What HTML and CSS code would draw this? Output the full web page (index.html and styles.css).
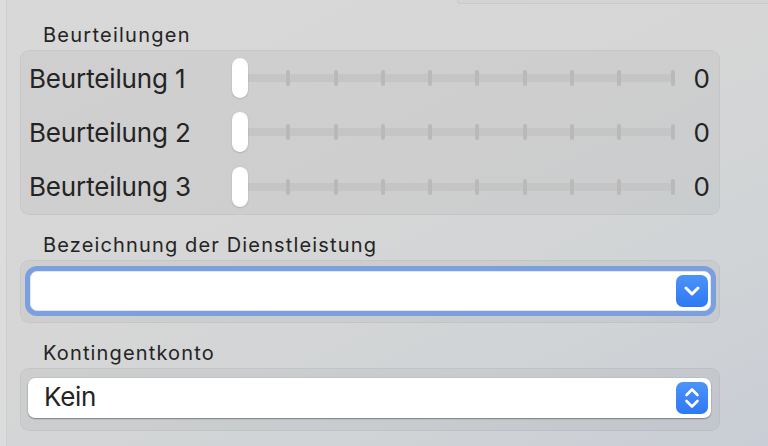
FILE: index.html
```html
<!DOCTYPE html>
<html lang="de">
<head>
<meta charset="utf-8">
<link rel="stylesheet" href="styles.css">
</head>
<body>
<div class="window">
  <div class="edge"></div>
  <div class="main">
    <div class="topbox"></div>

    <div class="label first">Beurteilungen</div>
    <div class="group ratings">
      <div class="row">
        <div class="rlabel">Beurteilung 1</div>
        <div class="slider">
          <div class="ticks"><i></i><i></i><i></i><i></i><i></i><i></i><i></i><i></i><i></i><i class="last"></i></div>
          <div class="thumb"></div>
        </div>
        <div class="value">0</div>
      </div>
      <div class="row">
        <div class="rlabel">Beurteilung 2</div>
        <div class="slider">
          <div class="ticks"><i></i><i></i><i></i><i></i><i></i><i></i><i></i><i></i><i></i><i class="last"></i></div>
          <div class="thumb"></div>
        </div>
        <div class="value">0</div>
      </div>
      <div class="row">
        <div class="rlabel">Beurteilung 3</div>
        <div class="slider">
          <div class="ticks"><i></i><i></i><i></i><i></i><i></i><i></i><i></i><i></i><i></i><i class="last"></i></div>
          <div class="thumb"></div>
        </div>
        <div class="value">0</div>
      </div>
    </div>

    <div class="label">Bezeichnung der Dienstleistung</div>
    <div class="group single">
      <div class="field">
        <div class="bluebtn">
          <svg width="32" height="32" viewBox="0 0 32 32"><path d="M10 13 L16 19 L22 13" fill="none" stroke="#fff" stroke-width="3" stroke-linecap="round" stroke-linejoin="round"/></svg>
        </div>
      </div>
    </div>

    <div class="label">Kontingentkonto</div>
    <div class="group single popup-group">
      <div class="popup">
        <span class="ptext">Kein</span>
        <div class="bluebtn">
          <svg width="32" height="32" viewBox="0 0 32 32"><path d="M10.5 13 L16 7.5 L21.5 13" fill="none" stroke="#fff" stroke-width="2.6" stroke-linecap="round" stroke-linejoin="round"/><path d="M10.5 19 L16 24.5 L21.5 19" fill="none" stroke="#fff" stroke-width="2.6" stroke-linecap="round" stroke-linejoin="round"/></svg>
        </div>
      </div>
    </div>
  </div>
</div>
</body>
</html>
```

FILE: styles.css
```css
html, body {
  margin: 0;
  padding: 0;
}
body {
  width: 768px;
  height: 446px;
  overflow: hidden;
  font-family: "Inter", "Liberation Sans", sans-serif;
  color: #242424;
  background: linear-gradient(155deg, #d8d8d8 0%, #d6d6d6 45%, #d0d4d6 75%, #c9cdd5 100%);
}
.window {
  display: flex;
  height: 446px;
}
.edge {
  width: 6px;
  flex: none;
  background: #dcdcdc;
  border-right: 1px solid #cfcfcf;
}
.main {
  flex: 1;
  display: flex;
  flex-direction: column;
  padding-left: 13px;
}
.topbox {
  align-self: flex-end;
  width: 310px;
  height: 3px;
  border-left: 1px solid #c9c9c9;
  border-bottom: 1px solid #c9c9c9;
  border-bottom-left-radius: 6px;
  background: #d4d4d4;
}
.label {
  font-size: 20px;
  line-height: 22px;
  letter-spacing: 1.15px;
  padding-left: 23px;
  margin-top: 19px;
  margin-bottom: 4px;
}
.label.first {
  margin-top: 20px;
  letter-spacing: 1.25px;
}
.group {
  width: 698px;
  border: 1px solid rgba(0, 0, 0, 0.045);
  background: rgba(0, 0, 0, 0.035);
  border-radius: 9px;
}
.ratings {
  height: 163px;
  display: grid;
  grid-template-rows: repeat(3, 54.33px);
}
.row {
  display: flex;
  align-items: center;
  padding-left: 8px;
}
.rlabel {
  width: 203px;
  font-size: 26px;
  letter-spacing: -0.15px;
}
.slider {
  position: relative;
  width: 444px;
  height: 40px;
  display: flex;
  align-items: center;
}
.ticks {
  margin-left: 7px;
  width: 436px;
  height: 16px;
  display: flex;
  gap: 43.3px;
  background: linear-gradient(#c5c5c5, #c5c5c5) center / 100% 8px no-repeat;
}
.ticks i {
  display: block;
  width: 4px;
  height: 16px;
  border-radius: 2px;
  background: #b9b9b9;
  flex: none;
}
.ticks i.last {
  margin-left: auto;
}
.thumb {
  position: absolute;
  left: 0;
  top: 0;
  width: 16px;
  height: 40px;
  border-radius: 8px;
  background: #fff;
  box-shadow: 0 0.5px 1.5px rgba(0, 0, 0, 0.25);
}
.value {
  flex: 1;
  text-align: right;
  padding-right: 9px;
  font-size: 26px;
}
.single {
  height: 61px;
}
.field {
  margin: 10px 0 0 9px;
  width: 677px;
  height: 38px;
  background: #fff;
  border: 1px solid #dfe6f4;
  border-radius: 7px;
  box-shadow: 0 0 0 5px #7c9fdf;
  display: flex;
  align-items: center;
  justify-content: flex-end;
  padding-right: 2px;
  box-sizing: content-box;
}
.bluebtn {
  width: 32px;
  height: 32px;
  border-radius: 7px;
  background: linear-gradient(#4c93f8, #2e78f4);
  flex: none;
}
.bluebtn svg {
  display: block;
}
.popup {
  margin: 9px 0 0 7px;
  width: 683px;
  height: 40px;
  background: #fff;
  border-radius: 7px;
  box-shadow: 0 1px 1.5px rgba(0, 0, 0, 0.35), 0 0 0 0.5px rgba(0, 0, 0, 0.08);
  display: flex;
  align-items: center;
  padding-right: 3px;
  box-sizing: border-box;
}
.ptext {
  flex: 1;
  padding-left: 16px;
  padding-bottom: 3px;
  font-size: 26px;
  letter-spacing: -0.3px;
}
```
